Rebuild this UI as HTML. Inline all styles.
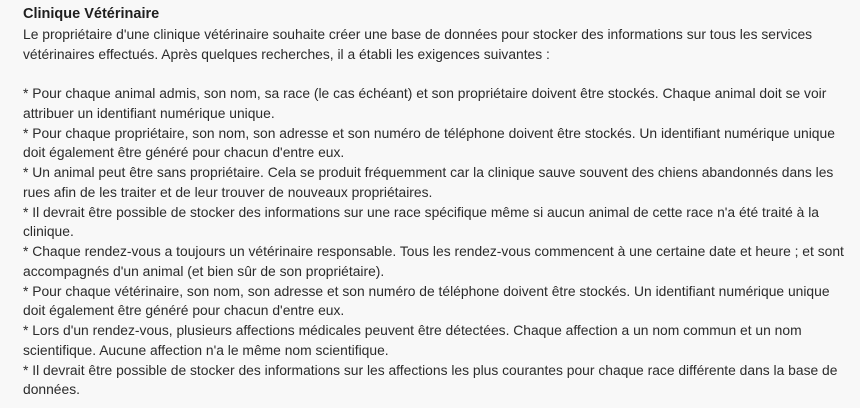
<!DOCTYPE html>
<html><head><meta charset="utf-8"><style>
html,body{margin:0;padding:0;background:#f8f8f8;width:860px;height:408px;overflow:hidden}
.w{position:absolute;left:23px;top:5px;font-family:"Liberation Sans","DejaVu Sans",sans-serif;font-size:13.85px;line-height:19.75px;color:#2b2b2b;white-space:nowrap}
.t{font-weight:bold;font-size:14.5px;color:#1e1e1e}
</style></head><body><div class="w">
<div class="t">Clinique Vétérinaire</div>
Le propriétaire d'une clinique vétérinaire souhaite créer une base de données pour stocker des informations sur tous les services<br>
vétérinaires effectués. Après quelques recherches, il a établi les exigences suivantes :<br>
&nbsp;<br>
* Pour chaque animal admis, son nom, sa race (le cas échéant) et son propriétaire doivent être stockés. Chaque animal doit se voir<br>
attribuer un identifiant numérique unique.<br>
* Pour chaque propriétaire, son nom, son adresse et son numéro de téléphone doivent être stockés. Un identifiant numérique unique<br>
doit également être généré pour chacun d'entre eux.<br>
* Un animal peut être sans propriétaire. Cela se produit fréquemment car la clinique sauve souvent des chiens abandonnés dans les<br>
rues afin de les traiter et de leur trouver de nouveaux propriétaires.<br>
* Il devrait être possible de stocker des informations sur une race spécifique même si aucun animal de cette race n'a été traité à la<br>
clinique.<br>
* Chaque rendez-vous a toujours un vétérinaire responsable. Tous les rendez-vous commencent à une certaine date et heure ; et sont<br>
accompagnés d'un animal (et bien sûr de son propriétaire).<br>
* Pour chaque vétérinaire, son nom, son adresse et son numéro de téléphone doivent être stockés. Un identifiant numérique unique<br>
doit également être généré pour chacun d'entre eux.<br>
* Lors d'un rendez-vous, plusieurs affections médicales peuvent être détectées. Chaque affection a un nom commun et un nom<br>
scientifique. Aucune affection n'a le même nom scientifique.<br>
* Il devrait être possible de stocker des informations sur les affections les plus courantes pour chaque race différente dans la base de<br>
données.
</div></body></html>
